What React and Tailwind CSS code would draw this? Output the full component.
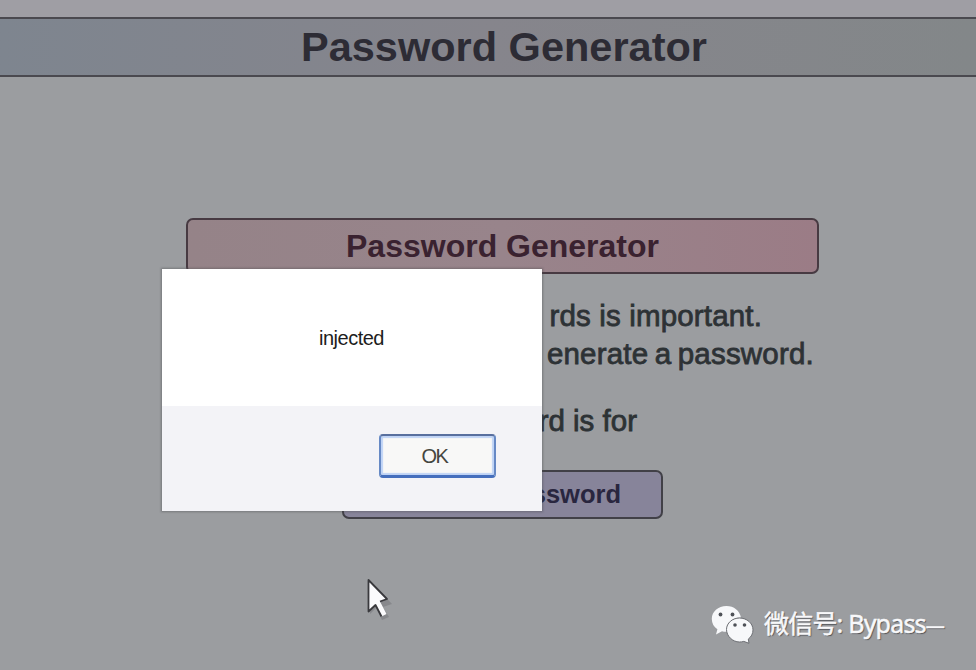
function Cursor() {
  return (
    <svg className="absolute left-[362px] top-[574px]" width="32" height="48" viewBox="0 0 32 48">
      <path d="M10 9 L30 30 L21 33 L27 43 L20 46 L14 34 L8 40Z" fill="#606267" opacity="0.35" />
      <path
        d="M6.5 6 L25 25 L18 27.5 L24.5 40 L19.5 42.5 L13.5 31 L6.5 37.5Z"
        fill="#fbfbfd"
      />
      <path
        d="M19.500 42.500 L13.500 31 L6.500 37.500 V6 L25 25 L18 27.500"
        fill="none"
        stroke="#39393d"
        strokeWidth="1.800"
        strokeLinejoin="round"
      />
    </svg>
  );
}

function ChatLogo() {
  return (
    <svg width="44" height="40" viewBox="0 0 44 40">
      <path
        d="M15.500 1C7 1 .8 6.600.8 14c0 4.300 2.100 8 5.600 10.300L5 29.500l6-3.300c1.600.500 3 .700 5 .600C15 18.500 21 12.500 30 12.500 28.500 5.500 23 1 15.500 1Z"
        fill="#f7f8fa"
      />
      <path
        d="M28.500 13C21.500 13 15.500 18 15.500 24.500S21.500 37 28.500 37c1.500 0 3-.2 4.300-.6l5.200 1.900-.7-4.200c2.900-2.200 4.700-5.500 4.700-9.200C42 18 35.500 13 28.500 13Z"
        fill="#f7f8fa"
        stroke="#6c6e73"
        strokeWidth="1"
      />
      <g fill="#4f5258">
        <circle cx="9.500" cy="9.500" r="1.900" />
        <circle cx="21.500" cy="9.500" r="1.900" />
        <circle cx="24" cy="20" r="1.800" />
        <circle cx="33.500" cy="20" r="1.800" />
      </g>
    </svg>
  );
}

function Dialog() {
  return (
    <div className="absolute left-[162px] top-[269px] flex h-[242px] w-[380px] flex-col bg-white shadow-[0_0_2px_1px_rgba(75,75,80,0.45)]">
      <div className="flex h-[137px] items-center justify-center pr-px text-[20px] leading-none tracking-[-0.5px] text-[#1d1d20]">
        injected
      </div>
      <div className="flex flex-1 items-start justify-end bg-[#f3f3f7] pr-[46px] pt-[28px]">
        <button className="flex h-[44px] w-[117px] items-center justify-center rounded-[4px] border-[2px] border-t-[#586f9e] border-x-[#6689c5] border-b-[3px] border-b-[#456fbd] bg-[#f8f8f7] pr-[6px] text-[20px] tracking-[-1.4px] text-[#45463f] shadow-[inset_0_0_1px_2px_#bfd3f5]">
          OK
        </button>
      </div>
    </div>
  );
}

export default function App() {
  return (
    <div className="relative h-[670px] w-[976px] overflow-hidden bg-[#9b9da0] font-['Liberation_Sans',sans-serif]">
      <div className="h-[17px] bg-[#9f9ea4]" />
      <header className="flex h-[60px] items-center justify-center border-y-2 border-[#4a494f] bg-[#86858b] bg-linear-to-r from-[#7e858f] via-[#86858c] to-[#838789] pl-[32px]">
        <h1 className="text-[41.5px] leading-none font-bold text-[#2d2c35]">Password Generator</h1>
      </header>
      <main className="ml-[186px] mt-[141px] flex w-[633px] flex-col items-center">
        <h2 className="flex h-[56px] w-full items-center justify-center rounded-[7px] border-2 border-[#473a42] bg-linear-to-r from-[#958388] via-[#98848b] to-[#9b7c86] text-[32px] font-bold text-[#3a2230]">
          Password Generator
        </h2>
        <div className="w-full whitespace-nowrap pt-[23px] text-right text-[29.5px] leading-[37px] text-[#2d3235] [-webkit-text-stroke:0.8px_#2d3235]">
          <p className="pr-[57px] tracking-[0.15px]">rds is important.</p>
          <p className="pr-[5px] pt-px tracking-[0.2px] [word-spacing:-2px]">enerate a password.</p>
          <p className="pr-[182px] pt-[30px]">rd is for</p>
        </div>
        <div className="mt-[31px] flex h-[49px] w-[321px] items-center justify-end rounded-[7px] border-2 border-[#414047] bg-[#87849a] pr-[40px] text-[25.5px] font-bold text-[#29263f]">
          ssword
        </div>
      </main>
      <Dialog />
      <Cursor />
      <div className="absolute left-[711px] top-[603px] flex items-center">
        <ChatLogo />
        <span className="ml-[9px] whitespace-nowrap font-['Noto_Sans','Noto_Sans_CJK_SC',sans-serif] text-[25px] leading-[40px] tracking-[-0.8px] text-[#f8f8fa] [-webkit-text-stroke:0.5px_#f8f8fa] [text-shadow:1px_1px_1px_#4c4e53]">
          微信号: Bypass<span className="text-[19px]">—</span>
        </span>
      </div>
    </div>
  );
}
